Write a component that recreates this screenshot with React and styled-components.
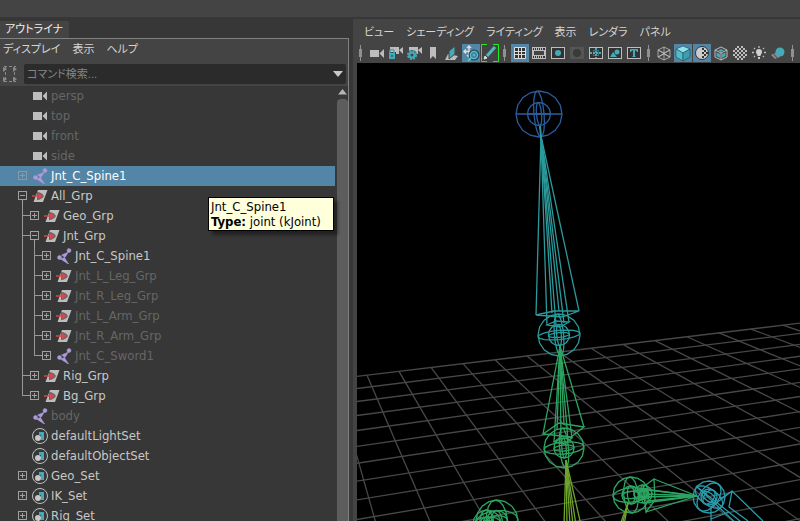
import React from 'react';
import styled, { createGlobalStyle, css } from 'styled-components';

const GlobalStyle = createGlobalStyle`
  * {
    box-sizing: border-box;
  }

  body {
    margin: 0;
    background: #373737;
    color: #c8c8c8;
    font-family: 'DejaVu Sans Condensed', 'Noto Sans CJK JP', sans-serif;
    font-size: 13px;
    font-feature-settings: 'palt';
  }

  button {
    padding: 0;
    border: 0;
    background: none;
    color: inherit;
    font: inherit;
    font-feature-settings: inherit;
  }

  svg {
    display: block;
  }
`;

const Page = styled.div`
  display: flex;
  flex-direction: column;
  height: 100vh;
  overflow: hidden;
`;

const TopBar = styled.header`
  flex: none;
  height: 17px;
  background: #444;
`;

const Workspace = styled.main`
  flex: 1;
  display: flex;
  gap: 4px;
  min-height: 0;
`;

const OutlinerPanel = styled.section`
  flex: 0 0 349px;
  display: flex;
  flex-direction: column;
  min-height: 0;
  padding-top: 4px;
`;

const Tab = styled.h2`
  align-self: flex-start;
  margin: 0;
  padding: 1px 6px 0 5px;
  height: 17px;
  border-radius: 0 2px 0 0;
  background: #444;
  color: #eee;
  font-size: 11px;
  font-weight: normal;
  line-height: 16px;
`;

const OutlinerBody = styled.div`
  flex: 1;
  display: flex;
  flex-direction: column;
  min-height: 0;
  border: solid #808080;
  border-width: 1px 1px 0 0;
  background: #444;
`;

const MenuBar = styled.nav`
  flex: none;
  display: flex;
  align-items: center;
  gap: 12px;
  height: ${props => props.$height}px;
  padding-top: 2px;
  padding-left: ${props => props.$inset}px;
  color: #d4d4d4;
  font-size: 11px;
  line-height: 16px;
  white-space: nowrap;
`;

const SearchRow = styled.div`
  flex: none;
  display: flex;
  align-items: center;
  gap: 6px;
  height: 22px;
  margin-top: 5px;
  padding: 0 2px;
`;

const SearchBox = styled.label`
  flex: 1;
  display: flex;
  align-items: center;
  height: 20px;
  padding: 0 3px;
  border-radius: 2px;
  background: #2b2b2b;
`;

const SearchInput = styled.input`
  flex: 1;
  min-width: 0;
  padding: 0;
  border: 0;
  outline: 0;
  background: none;
  color: #c8c8c8;
  font: inherit;
  font-size: 11px;
  font-feature-settings: 'palt';

  &::placeholder {
    color: #858585;
  }
`;

const TreeArea = styled.div`
  flex: 1;
  display: flex;
  gap: 2px;
  min-height: 0;
  margin-top: 1px;
  background: #373737;
`;

const TreeList = styled.ul`
  flex: 1;
  margin: 0;
  padding: 0;
  overflow: hidden;
  list-style: none;
`;

const Row = styled.li`
  display: flex;
  align-items: center;
  height: 20px;
  padding-left: 16px;
  line-height: 20px;
  color: ${props => (props.$dim ? '#666' : '#c8c8c8')};

  ${props => props.$selected && css`
    background: #5285a6;
    color: #fff;
  `}
`;

const Guide = styled.span`
  width: 12px;
  height: 20px;
`;

const Expander = styled.button`
  width: 12px;
  height: 20px;
`;

const NodeIcon = styled.span`
  margin: 0 3px 0 4px;
`;

const ScrollBar = styled.div`
  display: flex;
  flex-direction: column;
  width: 11px;
  padding-top: 3px;
  gap: 4px;
`;

const Thumb = styled.div`
  flex: 1;
  border-radius: 4px 4px 0 0;
  background: #5d5d5d;
`;

const Tooltip = styled.div`
  position: absolute;
  left: 208px;
  top: 197px;
  padding: 1px 12px 1px 2px;
  border: 1px solid #000;
  background: #ffffdc;
  box-shadow: 4px 4px 3px rgba(0, 0, 0, 0.4);
  color: #000;
  line-height: 15px;
`;

const ViewPanel = styled.section`
  flex: 1;
  display: flex;
  flex-direction: column;
  min-width: 0;
  margin-top: 2px;
  background: #444;
`;

const Toolbar = styled.div`
  flex: none;
  display: flex;
  gap: 1px;
  height: 19px;
  padding-left: 3px;
`;

const ToolButton = styled.button`
  flex: none;
  width: 18px;
  height: 18px;
  background: ${props => (props.$on ? '#5285a6' : 'none')};
`;

const Separator = styled.span`
  flex: none;
  width: 10px;
  height: 18px;
`;

const Viewport = styled.div`
  flex: 1;
  min-height: 0;
  margin-left: 4px;
  background: #000;

  svg {
    width: 100%;
    height: 100%;
  }
`;

const LIGHT = '#bdbdbd';
const TEAL = '#45aab8';

const nodeIcons = {
  camera: (
    <g fill="#bdbdbd">
      <rect x="1" y="4" width="9" height="8" />
      <path d="M10.500 8L15 3.500v9z" />
    </g>
  ),
  joint: (
    <g fill="#ab9bd8" stroke="#ab9bd8" strokeWidth=".5">
      <circle cx="13" cy="2.500" r="2" />
      <circle cx="3.500" cy="9.500" r="2" />
      <path d="M12.500 4L9 9.500 5.500 7zM4.500 11l4-1.500L10 12l3 4.500z" />
    </g>
  ),
  group: (
    <g>
      <path d="M6 2h9.500L11 14H1.500z" fill="#bdbdbd" />
      <path d="M5 4c3 0 6 2 7 4-1 2-4 4-7 4z" fill="#666" />
      <path d="M0 8h7" stroke="#d9474b" strokeWidth="1.500" />
      <path d="M6 5l5 3-5 3z" fill="#d9474b" />
    </g>
  ),
  set: (
    <g>
      <circle cx="8" cy="8" r="7.500" fill="none" stroke="#c0c0c0" />
      <path d="M7 4h5v8H9V7H7z" fill="#45aab8" />
      <circle cx="6" cy="10" r="3" fill="#c8c8c8" />
    </g>
  ),
};

const nodes = [
  { name: 'persp', icon: 'camera', dim: true },
  { name: 'top', icon: 'camera', dim: true },
  { name: 'front', icon: 'camera', dim: true },
  { name: 'side', icon: 'camera', dim: true },
  { name: 'Jnt_C_Spine1', icon: 'joint', toggle: 'plus', selected: true },
  { name: 'All_Grp', icon: 'group', toggle: 'minus' },
  { name: 'Geo_Grp', icon: 'group', toggle: 'plus', guides: ['tee'] },
  { name: 'Jnt_Grp', icon: 'group', toggle: 'minus', guides: ['tee'] },
  { name: 'Jnt_C_Spine1', icon: 'joint', toggle: 'plus', guides: ['line', 'tee'] },
  { name: 'Jnt_L_Leg_Grp', icon: 'group', toggle: 'plus', guides: ['line', 'tee'], dim: true },
  { name: 'Jnt_R_Leg_Grp', icon: 'group', toggle: 'plus', guides: ['line', 'tee'], dim: true },
  { name: 'Jnt_L_Arm_Grp', icon: 'group', toggle: 'plus', guides: ['line', 'tee'], dim: true },
  { name: 'Jnt_R_Arm_Grp', icon: 'group', toggle: 'plus', guides: ['line', 'tee'], dim: true },
  { name: 'Jnt_C_Sword1', icon: 'joint', toggle: 'plus', guides: ['line', 'end'], dim: true },
  { name: 'Rig_Grp', icon: 'group', toggle: 'plus', guides: ['tee'] },
  { name: 'Bg_Grp', icon: 'group', toggle: 'plus', guides: ['end'] },
  { name: 'body', icon: 'joint', dim: true },
  { name: 'defaultLightSet', icon: 'set' },
  { name: 'defaultObjectSet', icon: 'set' },
  { name: 'Geo_Set', icon: 'set', toggle: 'plus' },
  { name: 'IK_Set', icon: 'set', toggle: 'plus' },
  { name: 'Rig_Set', icon: 'set', toggle: 'plus' },
];

const guidePaths = {
  line: 'M6.500 0V20',
  tee: 'M6.500 0V20M6 9.500h6',
  end: 'M6.500 0V10M6 9.500h6',
};

const TreeRow = ({ name, icon, toggle, guides = [], dim, selected }) => (
  <Row $dim={dim} $selected={selected}>
    {guides.map((kind, i) => (
      <Guide key={i}>
        <svg width="12" height="20" fill="none" stroke="#989898">
          <path d={guidePaths[kind]} />
        </svg>
      </Guide>
    ))}
    {toggle ? (
      <Expander aria-label={name} aria-expanded={toggle === 'minus'}>
        <svg width="12" height="20" fill="none" stroke={selected ? '#8a9aa5' : '#a0a0a0'}>
          <rect x="2.500" y="5.500" width="8" height="8" />
          <path d="M4 9.500h5" />
          {toggle === 'plus' && <path d="M6.500 7v5" />}
          {toggle === 'minus' && <path d="M6.500 14v6" />}
          {guides.length > 0 && <path d="M0 9.500h2" />}
        </svg>
      </Expander>
    ) : (
      <Guide />
    )}
    <NodeIcon>
      <svg width="16" height="16">{nodeIcons[icon]}</svg>
    </NodeIcon>
    {name}
  </Row>
);

const cube = 'M9 3l6 3v7l-6 3-6-3V6zM3 6l6 3 6-3M9 9v7';

const checks = [];
for (let y = 0; y < 7; y++) {
  for (let x = 0; x < 7; x++) {
    const inside = (x - 3) ** 2 + (y - 3) ** 2 < 12;
    if ((x + y) % 2 === 0 && inside) checks.push([x, y]);
  }
}

const Frame = () => <rect x="2.500" y="3.500" width="13" height="11" fill="#333" stroke={LIGHT} />;

const tools = [
  { sep: true },
  {
    label: 'カメラ',
    icon: (
      <g fill={LIGHT}>
        <rect x="3" y="6" width="9" height="7" />
        <path d="M12.500 9.500L17 5v9z" />
      </g>
    ),
  },
  {
    label: 'カメラのロック',
    icon: (
      <g>
        <path d="M4 3h9v7H4zM13 6l4-3v7z" fill={LIGHT} />
        <path d="M2 8h8v8H2z" fill="#444" />
        <path d="M3 9h6v6H3z" fill={TEAL} />
        <path d="M4 9V7.500a2 2 0 0 1 4 0V9" fill="none" stroke={TEAL} strokeWidth="1.500" />
        <path d="M6 11v2" stroke="#234" />
      </g>
    ),
  },
  {
    label: 'カメラの設定',
    icon: (
      <g>
        <path d="M4 3h9v7H4zM13 6l4-3v7z" fill={LIGHT} />
        <circle cx="7" cy="11" r="5" fill="#444" />
        <circle cx="7" cy="11" r="4" fill="none" stroke={TEAL} strokeWidth="2" strokeDasharray="2 1.140" />
        <circle cx="7" cy="11" r="2.500" fill="none" stroke={TEAL} strokeWidth="2" />
      </g>
    ),
  },
  { label: 'ブックマーク', icon: <path d="M6 3h6v12l-3-3-3 3z" fill={LIGHT} /> },
  {
    label: 'イメージ プレーン',
    icon: (
      <g>
        <path d="M5 10L2 16h10l3-4z" fill={LIGHT} />
        <path d="M6 7l6-5v8l-6 5z" fill={TEAL} stroke="#444" />
      </g>
    ),
  },
  {
    label: '2D パン/ズーム',
    on: true,
    icon: (
      <g fill="none" stroke="#ddd">
        <path d="M7 2v11M2 7.500h10M5 4l2-2 2 2M4 5.500l-2 2 2 2M5 11l2 2" strokeWidth="1.500" />
        <circle cx="12" cy="11" r="4" fill="#5285a6" stroke="#244a5e" strokeWidth="3" />
        <circle cx="12" cy="11" r="3.500" stroke="#56c3cf" strokeWidth="1.500" />
        <path d="M9 14l-3 3" stroke="#56c3cf" strokeWidth="2" />
        <circle cx="12" cy="11" r="1" fill="#56c3cf" stroke="none" />
      </g>
    ),
  },
  {
    label: 'グリース ペンシル',
    icon: (
      <g fill="none">
        <path d="M6 .500H.500v17H6M12 .500h5.500v17H12" stroke="#1cf01c" />
        <path d="M6 12l8-9" stroke="#56b5c2" strokeWidth="3" />
        <path d="M3 15l1-3 2 2z" fill="#ddd" stroke="#ddd" />
      </g>
    ),
  },
  { sep: true },
  {
    label: 'グリッド',
    on: true,
    icon: (
      <path
        d="M3.500 3.500h11v11h-11zM7.500 3v12M10.500 3v12M3 7.500h12M3 10.500h12"
        fill="#333"
        stroke="#ddd"
      />
    ),
  },
  {
    label: 'フィルム ゲート',
    icon: (
      <g>
        <Frame />
        <path d="M4 5h10M4 13h10" stroke={LIGHT} strokeWidth="2" strokeDasharray="1 1" />
        <path d="M3 6h12v6H3z" fill={LIGHT} />
        <path d="M4 7h10v4H4z" fill="#444" />
      </g>
    ),
  },
  { label: '解像度ゲート', icon: <g><Frame /><circle cx="9" cy="9" r="3" fill={TEAL} /></g> },
  {
    label: 'ゲート マスク',
    icon: (
      <g>
        <rect x="2" y="3" width="14" height="12" fill="#555" />
        <circle cx="9" cy="9" r="4" fill="#3a3a3a" />
      </g>
    ),
  },
  {
    label: 'フィールド チャート',
    icon: (
      <g>
        <Frame />
        <path d="M9 4v10M3 9h12" stroke={TEAL} strokeWidth="2" strokeDasharray="2 1" />
        <path d="M6.500 6.500h5v5h-5z" fill="none" stroke={TEAL} strokeDasharray="1 1" />
      </g>
    ),
  },
  {
    label: 'セーフ アクション',
    icon: <g><Frame /><path d="M4 13l3-5 4 5z" fill={TEAL} /><circle cx="11" cy="8" r="2.500" fill={TEAL} /></g>,
  },
  {
    label: 'セーフ タイトル',
    icon: <g><Frame /><path d="M5 5h8v3h-1l-1-1.500h-1V12l1 1H7l1-1V6.500H7L6 8H5z" fill={TEAL} /></g>,
  },
  { sep: true },
  {
    label: 'ワイヤフレーム',
    icon: <path d={cube + 'M3 13l6-3 6 3M9 3v6M3 6l12 7M15 6L3 13'} fill="none" stroke={LIGHT} strokeWidth=".8" />,
  },
  {
    label: 'スムーズ シェード',
    on: true,
    icon: (
      <g stroke="#1f4e5a" strokeWidth=".6">
        <path d="M9 2l7 3-7 4-7-4z" fill="#8fe0e8" />
        <path d="M2 5l7 4v8l-7-4z" fill="#56bccb" />
        <path d="M16 5L9 9v8l7-4z" fill="#3c9fb0" />
      </g>
    ),
  },
  {
    label: 'マテリアル',
    on: true,
    icon: (
      <g>
        <circle cx="9" cy="9" r="6.500" fill="#ccc" stroke="#333" />
        <path d="M9 4h2v2h2v2h-2v2h2v2h-2v2H9v-2h2v-2H9V8h2V6H9zM13 8h2v2h-2z" fill="#333" />
      </g>
    ),
  },
  {
    label: 'シェード上のワイヤ',
    icon: (
      <g>
        <path d={cube} fill="none" stroke={LIGHT} />
        <path d="M9 5l3 1.500L9 8 6 6.500zM4.500 8.500L8 10v4l-3.500-2zM13.500 8.500L10 10v4l3.500-2z" fill={TEAL} />
      </g>
    ),
  },
  {
    label: 'テクスチャ',
    icon: (
      <g fill={LIGHT}>
        {checks.map(([x, y]) => <rect key={`${x}-${y}`} x={2 + x * 2} y={2 + y * 2} width="2" height="2" />)}
      </g>
    ),
  },
  {
    label: 'ライト',
    icon: (
      <g>
        <path d="M6 8a3 3 0 1 1 6 0c0 2-1.500 2-1.500 4h-3c0-2-1.500-2-1.500-4zM8 13h2v2H8z" fill="#d0d0d0" />
        <path d="M9 2v2M2 8.500h2M14 8.500h2M4 4l1 1M14 4l-1 1M4 13l1-1M14 13l-1-1" stroke={LIGHT} strokeWidth="1.300" />
      </g>
    ),
  },
  {
    label: 'シャドウ',
    icon: (
      <g>
        <path d="M2 11l4 4 5-2-3-5z" fill="#8a8a8a" />
        <path d="M4 9l4 5" stroke="#444" />
        <circle cx="11" cy="8" r="4.500" fill={TEAL} />
      </g>
    ),
  },
  { sep: true },
];

const Tool = ({ sep, label, icon, on }) =>
  sep ? (
    <Separator>
      <svg width="10" height="18" fill="#919191">
        <rect x="4" y="1" width="1" height="16" />
        <rect x="3" y="5" width="3" height="8" />
      </svg>
    </Separator>
  ) : (
    <ToolButton aria-label={label} $on={on}>
      <svg width="18" height="18">{icon}</svg>
    </ToolButton>
  );

// Ground plane: the lines of each direction meet in their own vanishing point.
const columns = [];
for (let i = -6; i < 12; i++) columns.push(527 + i * 32);
const rows = [];
for (let i = 0; i < 16; i++) rows.push(358 + i * 11 + i * i * 0.45);

const Ground = () => (
  <g stroke="#484848" strokeWidth="1.300">
    {rows.map(y => <path key={y} d={`M510 ${y}L3200 35M510 ${y}L-100 ${y + ((y - 35) * 610) / 2690}`} />)}
    {columns.map(x => {
      const y = 358 - (x - 510) * 0.12;
      return <path key={x} d={`M${x} ${y}L${x + (x - 270) * 4} ${y + (y - 150) * 4}`} />;
    })}
  </g>
);

const ring = (cx, cy, rx, ry, tilt = 0) => {
  const points = [];
  const t = (tilt * Math.PI) / 180;
  for (let i = 0; i < 16; i++) {
    const a = (i * Math.PI) / 8;
    const x = rx * Math.cos(a);
    const y = ry * Math.sin(a);
    points.push(`${cx + x * Math.cos(t) - y * Math.sin(t)},${cy + x * Math.sin(t) + y * Math.cos(t)}`);
  }
  return points.join(' ');
};

const Joint = ({ x, y, r, color, flat = 0.1, narrow = 0.22, tilt = -5, roll = tilt }) => (
  <g stroke={color} fill="none">
    {[r, r / 2].map(size => (
      <g key={size}>
        <polygon points={ring(x, y, size, size)} />
        <polygon points={ring(x, y, size * narrow, size, tilt)} />
        <polygon points={ring(x, y, size, size * flat, roll)} />
      </g>
    ))}
  </g>
);

const Bone = ({ from, base, color }) => (
  <g stroke={color} fill="none">
    {base.map(([x, y]) => <path key={`${x},${y}`} d={`M${from[0]} ${from[1]}L${x} ${y}`} />)}
  </g>
);

const Skeleton = () => (
  <g strokeWidth="1.300">
    <Joint x={539} y={114} r={23} color="#2b5d9e" flat={0.01} roll={0} />
    <path d="M540 126L541 137" stroke="#2a9a9c" strokeWidth="2" />
    <Bone
      color="#2a9a9c"
      from={[541, 136]}
      base={[[536, 315], [547, 325], [552, 313], [556, 325], [559, 311], [564, 323], [569, 322], [579, 311]]}
    />
    <g stroke="#2a9a9c" fill="none">
      <polygon points="536,315 554,311 579,311 562,317" />
      <polygon points="547,325 556,321 569,322 560,327" />
    </g>
    <Joint x={559} y={335} r={21} color="#2a9a9c" flat={0.22} />
    <Bone
      color="#2da562"
      from={[560, 346]}
      base={[[543, 434], [554, 442], [557, 429], [561, 443], [564, 425], [568, 440], [572, 438], [584, 427]]}
    />
    <g stroke="#2da562" fill="none">
      <polygon points="543,434 559,423 584,427 571,437" />
      <polygon points="554,442 562,436 572,438 565,444" />
    </g>
    <Joint x={564} y={448} r={20} color="#2da562" flat={0.3} />
    <Bone color="#6fa42d" from={[566, 460]} base={[[564, 525], [567, 525], [570, 525], [573, 525], [576, 525], [581, 525]]} />
    <Joint x={497} y={521} r={21} color="#2da562" flat={0.5} narrow={0.5} />
    <Joint x={487} y={524} r={14} color="#2da562" flat={0.5} narrow={0.5} />
    <Joint x={631} y={495} r={18} color="#2da562" flat={0.4} narrow={0.4} />
    <Joint x={643} y={494} r={9} color="#2da562" flat={0.6} />
    <Bone
      color="#2da562"
      from={[697, 496]}
      base={[[654, 479], [643, 489], [649, 490], [645, 494], [640, 497], [648, 501], [644, 503], [646, 512]]}
    />
    <path d="M654 479L643 487L646 512L655 500Z" stroke="#2da562" fill="none" />
    <Bone color="#6fa42d" from={[628, 503]} base={[[620, 525], [622, 525], [624, 525]]} />
    <Joint x={709} y={497} r={16} color="#2a9bab" flat={0.5} narrow={0.6} tilt={35} />
    <Bone color="#2a9bab" from={[696, 486]} base={[[745, 525], [738, 525]]} />
    <path
      d="M711 521V507L732 491L763 521M732 491L729 507L748 521M711 519L729 512M720 499L732 491"
      stroke="#2a9bab"
      fill="none"
    />
  </g>
);

const Outliner = () => (
  <OutlinerPanel>
    <Tab>アウトライナ</Tab>
    <OutlinerBody>
      <MenuBar $height={19} $inset={3}>
        <button>ディスプレイ</button>
        <button>表示</button>
        <button>ヘルプ</button>
      </MenuBar>
      <SearchRow>
        <svg width="16" height="18" fill="none" stroke="#8a8a8a">
          <path d="M2 1.500h12M2 16.500h12" strokeDasharray="3 2" />
          <path d="M3.500 2v14M12.500 2v14" strokeDasharray="3 2" />
          <path d="M1 2l4 2-4 3zM1 12l4 2-4 3zM11 2l4 2-4 3zM11 12l4 2-4 3z" fill="#8a8a8a" stroke="none" />
        </svg>
        <SearchBox>
          <SearchInput placeholder="コマンド検索..." aria-label="コマンド検索" />
          <svg width="10" height="6"><path d="M0 0h10L5 6z" fill="#c8c8c8" /></svg>
        </SearchBox>
      </SearchRow>
      <TreeArea>
        <TreeList>
          {nodes.map((node, i) => <TreeRow key={i} {...node} />)}
        </TreeList>
        <ScrollBar>
          <svg width="11" height="6"><path d="M1 5.500h9L5.500 0z" fill="#b4b4b4" /></svg>
          <Thumb />
        </ScrollBar>
      </TreeArea>
    </OutlinerBody>
  </OutlinerPanel>
);

const App = () => (
  <Page>
    <GlobalStyle />
    <TopBar />
    <Workspace>
      <Outliner />
      <ViewPanel>
        <MenuBar $height={25} $inset={11}>
          <button>ビュー</button>
          <button>シェーディング</button>
          <button>ライティング</button>
          <button>表示</button>
          <button>レンダラ</button>
          <button>パネル</button>
        </MenuBar>
        <Toolbar>
          {tools.map((tool, i) => <Tool key={i} {...tool} />)}
        </Toolbar>
        <Viewport>
          <svg viewBox="357 63 443 458" preserveAspectRatio="xMinYMin slice">
            <Ground />
            <Skeleton />
          </svg>
        </Viewport>
      </ViewPanel>
    </Workspace>
    <Tooltip role="tooltip">
      Jnt_C_Spine1
      <br />
      <b>Type:</b> joint (kJoint)
    </Tooltip>
  </Page>
);

export default App;
